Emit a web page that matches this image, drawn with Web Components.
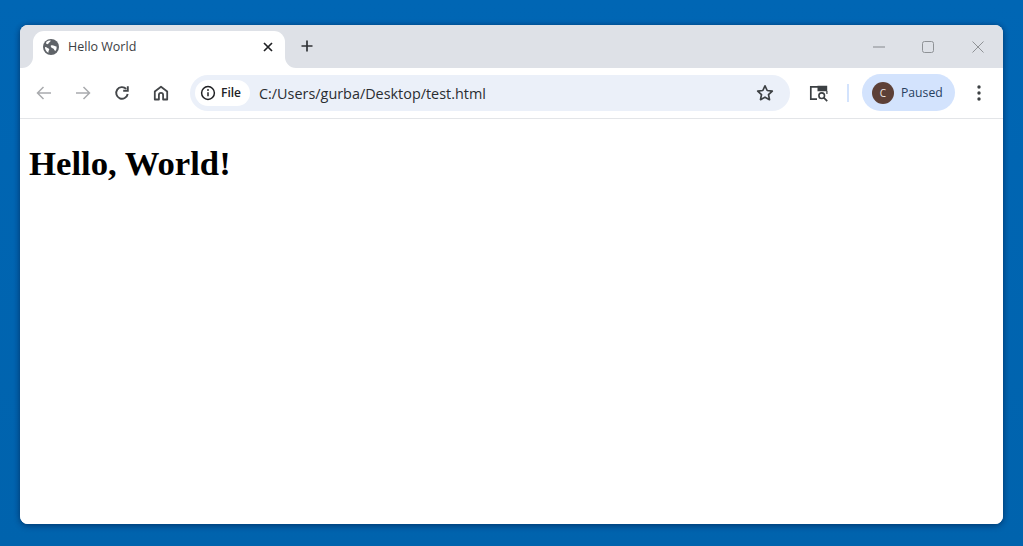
<!DOCTYPE html>
<html lang="en">
<head>
<meta charset="utf-8">
<title>Hello World</title>
<style>
html,body{margin:0;height:546px;overflow:hidden}
body{background:linear-gradient(180deg,#0066b4 0%,#0063ad 100%);padding:25px 20px 22px;box-sizing:border-box;font-family:"Open Sans","Noto Sans",sans-serif}
</style>
</head>
<body>
<browser-window>
  <tab-strip title-text="Hello World"></tab-strip>
  <nav-toolbar url="C:/Users/gurba/Desktop/test.html"></nav-toolbar>
  <page-content><h1 slot="heading">Hello, World!</h1></page-content>
</browser-window>
<script>
class BrowserWindow extends HTMLElement{
  constructor(){super();this.attachShadow({mode:'open'}).innerHTML=`<style>
  :host{display:flex;flex-direction:column;height:499px;border-radius:8px;overflow:hidden;background:#fff;box-shadow:0 0 5px rgba(0,30,70,.35),0 2px 6px rgba(0,30,70,.4)}
  </style><slot></slot>`}
}
class TabStrip extends HTMLElement{
  constructor(){super();const t=this.getAttribute('title-text')||'';this.attachShadow({mode:'open'}).innerHTML=`<style>
  :host{display:flex;flex:none;height:43px;background:#dee1e7;box-sizing:border-box;padding:6px 0 0 13px;align-items:stretch}
  .tab{position:relative;width:252px;background:#fff;border-radius:11px 11px 0 0;display:flex;align-items:center;padding:0 10px 6px 10px;box-sizing:border-box}
  .flare{position:absolute;bottom:0;width:11px;height:11px}
  .l{left:-11px}.r{right:-11px}
  .title{font-size:12.500px;color:#3c4043;margin-left:9px;flex:1;white-space:nowrap}
  .close{width:20px;height:20px;display:flex;align-items:center;justify-content:center;margin-right:-3px}
  .plus{width:16px;height:16px;margin:7px 0 0 14px}
  .spacer{flex:1}
  .ctl{width:50px;display:flex;align-items:center;justify-content:center;padding-bottom:6px}
  .min{padding-left:2px;box-sizing:border-box}
  svg{display:block}
  </style>
  <div class="tab">
    <svg class="flare l" viewBox="0 0 11 11"><path d="M0 11A11 11 0 0 0 11 0V11Z" fill="#fff"/></svg>
    <svg width="16" height="16" viewBox="0 0 16 16"><circle cx="8" cy="8" r="8" fill="#5f6368"/><path d="M3.200 3c1.400-1 2.900-1.500 4.500-1.400-.1 1-.9 1.600-1.700 2.100-.6.400-.5 1.200-1.100 1.400-.7.300-1.300-.1-1.700-.4zM7.800 6.500c1.100-.6 2.500-.4 3.400.2.800.4 1.700.4 2.300.9.300 1.400 0 3-.8 4.200-.9.200-1.400-.5-1.600-1.200-.3-.9-1.300-1-2.100-1.500-.9-.6-1.500-1.800-1.200-2.600zM2 8.100c.9-.1 1.800.4 2.500 1 .6.400 1.500.4 1.700 1.200.2.800-.6 1.200-.7 2-.1.600.1 1.200-.2 1.500C3.200 12.800 1.800 10.400 2 8.100z" fill="#fff"/></svg>
    <span class="title">${t}</span>
    <span class="close"><svg width="10" height="10" viewBox="0 0 10 10"><path d="M1 1l8 8M9 1l-8 8" stroke="#202124" stroke-width="1.700" fill="none"/></svg></span>
    <svg class="flare r" viewBox="0 0 11 11"><path d="M11 11A11 11 0 0 1 0 0V11Z" fill="#fff"/></svg>
  </div>
  <svg class="plus" viewBox="0 0 16 16"><path d="M8 2.500v11M2.500 8h11" stroke="#303236" stroke-width="1.700" fill="none"/></svg>
  <span class="spacer"></span>
  <span class="ctl min"><svg width="12" height="2" viewBox="0 0 12 2"><path d="M0 1h12" stroke="#85888d" stroke-width="1"/></svg></span>
  <span class="ctl"><svg width="12" height="12" viewBox="0 0 12 12"><rect x=".5" y=".5" width="11" height="11" rx="2" fill="none" stroke="#8f9296" stroke-width="1"/></svg></span>
  <span class="ctl"><svg width="12" height="12" viewBox="0 0 12 12"><path d="M.5.500l11 11M11.500.500l-11 11" stroke="#8f9296" stroke-width="1" fill="none"/></svg></span>`}
}
class NavToolbar extends HTMLElement{
  constructor(){super();const u=this.getAttribute('url')||'';this.attachShadow({mode:'open'}).innerHTML=`<style>
  :host{display:flex;flex:none;height:51px;box-sizing:border-box;border-bottom:1px solid #e3e5e8;background:#fff;align-items:center;padding:0 0 1px 0}
  svg{display:block}
  .nav{display:flex;gap:19px;margin-left:14px;padding-right:19px}
  .nav svg{width:20px;height:20px}
  .omni{width:600px;height:36px;border-radius:18px;background:#ebf0f9;display:flex;align-items:center;box-sizing:border-box;padding:0 15px 0 5px;flex:none}
  .chip{height:26px;width:55px;border-radius:13px;background:#fff;display:flex;align-items:center;box-sizing:border-box;padding-left:5px;gap:5px;font-size:12px;font-weight:600;color:#202124;flex:none}
  .url{flex:1;margin:1px 0 0 9px;font-size:14.400px;color:#2a2d31;white-space:nowrap}
  .lens{margin-left:19px}
  .sep{width:2px;height:18px;background:#d3e3fd;margin:0 13px 0 18px;flex:none}
  .pill{width:93px;height:37px;border-radius:19px;background:#d3e3fd;display:flex;align-items:center;box-sizing:border-box;padding-left:10px;gap:7px;font-size:12.200px;color:#28405f;flex:none}
  .avatar{width:22px;height:22px;border-radius:50%;background:#5d4037;color:#f1e9e6;font-size:10px;display:flex;align-items:center;justify-content:center;flex:none}
  .menu{margin-left:14px}
  </style>
  <div class="nav">
    <svg viewBox="0 0 20 20"><path d="M17 10H3.500M9.500 4l-6 6 6 6" fill="none" stroke="#a9abae" stroke-width="1.500"/></svg>
    <svg viewBox="0 0 20 20"><path d="M3 10h13.500M10.500 4l6 6-6 6" fill="none" stroke="#a9abae" stroke-width="1.500"/></svg>
    <svg viewBox="0 0 20 20"><path d="M15.700 11a5.800 5.800 0 1 1-1.500-5.100" fill="none" stroke="#44474a" stroke-width="1.900"/><path d="M15.800 3.200v4.600h-4.600" fill="none" stroke="#44474a" stroke-width="1.900"/></svg>
    <svg viewBox="0 0 20 20"><path d="M3.800 16.500V8.500L10 3.700l6.200 4.800v8h-4.100v-4.500a2.100 2.100 0 0 0-4.200 0v4.500z" fill="none" stroke="#44474a" stroke-width="1.800" stroke-linejoin="round"/></svg>
  </div>
  <div class="omni">
    <div class="chip"><svg width="16" height="16" viewBox="0 0 16 16"><circle cx="8" cy="8" r="6.400" fill="none" stroke="#202124" stroke-width="1.500"/><path d="M8 7.200v4" stroke="#202124" stroke-width="1.500"/><circle cx="8" cy="5" r=".95" fill="#202124"/></svg><span>File</span></div>
    <span class="url">${u}</span>
    <svg width="20" height="20" viewBox="0 0 20 20"><path d="M10 2.800l2.200 4.700 5.100.6-3.800 3.500 1 5.100L10 14.200l-4.500 2.500 1-5.100-3.800-3.500 5.100-.6z" fill="none" stroke="#3c4043" stroke-width="1.700" stroke-linejoin="round"/></svg>
  </div>
  <svg class="lens" width="20" height="18" viewBox="0 0 20 18"><path d="M8 15.200H1.800V2.800H13" fill="none" stroke="#3c4043" stroke-width="1.700"/><path d="M8.500 1.800h9.700v5.400H8.500z" fill="#3c4043"/><path d="M17.900 7v3" stroke="#3c4043" stroke-width="1.200"/><circle cx="12.700" cy="11.700" r="2.800" fill="#fff" stroke="#3c4043" stroke-width="1.600"/><path d="M14.700 13.700l3.500 3.400" stroke="#3c4043" stroke-width="1.700"/></svg>
  <span class="sep"></span>
  <div class="pill"><span class="avatar">C</span><span>Paused</span></div>
  <svg class="menu" width="20" height="20" viewBox="0 0 20 20"><circle cx="10" cy="4" r="1.700" fill="#3c4043"/><circle cx="10" cy="10" r="1.700" fill="#3c4043"/><circle cx="10" cy="16" r="1.700" fill="#3c4043"/></svg>`}
}
class PageContent extends HTMLElement{
  constructor(){super();this.attachShadow({mode:'open'}).innerHTML=`<style>
  :host{display:block;flex:1;background:#fff;padding:25px 9px 0;color:#000}
  ::slotted(h1){margin:0;font:bold 34.700px/1.15 "Liberation Serif","Times New Roman",serif}
  </style><slot name="heading"></slot>`}
}
customElements.define('browser-window',BrowserWindow);
customElements.define('tab-strip',TabStrip);
customElements.define('nav-toolbar',NavToolbar);
customElements.define('page-content',PageContent);
</script>
</body>
</html>
